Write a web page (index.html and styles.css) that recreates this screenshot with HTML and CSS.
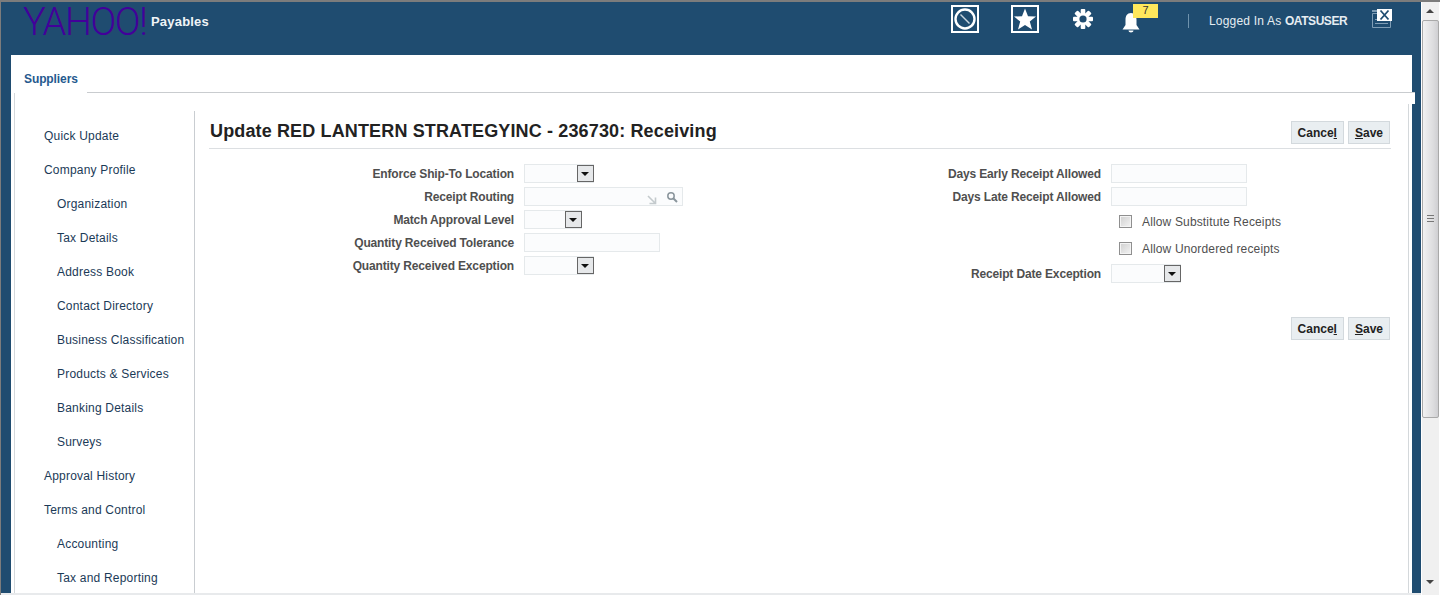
FILE: index.html
```html
<!DOCTYPE html>
<html lang="en">
<head>
  <meta charset="UTF-8">
  <title>Payables - Suppliers</title>
  <link rel="stylesheet" href="styles.css">
</head>
<body>
  <div class="frame">
    <div class="app">
      <header class="topbar">
        <div class="logo">YAHOO!</div>
        <div class="app-name">Payables</div>
        <div class="top-icons">
          <span class="box-icon">
            <svg width="24" height="24" viewBox="0 0 24 24"><circle cx="12" cy="12" r="9.5" fill="none" stroke="#fff" stroke-width="2.4"/><path d="M7.5 7.5 L16.5 16.5" stroke="#c9d6df" stroke-width="1.4"/></svg>
          </span>
          <span class="box-icon box-icon-star">
            <svg width="24" height="24" viewBox="0 0 24 24"><polygon points="12,1.5 15,9.2 23,9.5 16.8,14.6 19,22.6 12,18 5,22.6 7.2,14.6 1,9.5 9,9.2" fill="#fff"/></svg>
          </span>
          <span class="gear">
            <svg width="22" height="22" viewBox="0 0 22 22">
              <g fill="#fff">
                <rect x="8.7" y="1" width="4.6" height="20" rx="1"/>
                <rect x="8.7" y="1" width="4.6" height="20" rx="1" transform="rotate(45 11 11)"/>
                <rect x="8.7" y="1" width="4.6" height="20" rx="1" transform="rotate(90 11 11)"/>
                <rect x="8.7" y="1" width="4.6" height="20" rx="1" transform="rotate(135 11 11)"/>
              </g>
              <circle cx="11" cy="11" r="6" fill="#fff"/>
              <circle cx="11" cy="11" r="3.6" fill="#1f4c70"/>
            </svg>
          </span>
          <span class="bell">
            <svg width="20" height="24" viewBox="0 0 20 24"><path d="M10 3 C14 3 15.5 6 15.5 10 L15.5 15 L18.5 19.5 L1.5 19.5 L4.5 15 L4.5 10 C4.5 6 6 3 10 3 Z M7.5 20.5 L12.5 20.5 C12.5 23 7.5 23 7.5 20.5 Z" fill="#fff"/></svg>
            <span class="badge">7</span>
          </span>
          <span class="divider"></span>
          <span class="user">Logged In As <b>OATSUSER</b></span>
          <span class="close-icon">
            <svg width="20" height="22" viewBox="0 0 20 22">
              <path d="M0.5 6.5 H18.5 V20.5 H0.5 Z M3 12.5 H16 M3 16.5 H16" fill="none" stroke="#7f9db5"/>
              <rect x="0" y="3" width="6" height="2" fill="#7f9db5"/>
              <rect x="5" y="2" width="15" height="12" fill="#fff"/>
              <path d="M8.5 3.5 L16.5 12.5 M16.5 3.5 L8.5 12.5" stroke="#1f4c70" stroke-width="1.8"/>
            </svg>
          </span>
        </div>
      </header>

      <div class="panel">
        <div class="tabs">
          <a class="tab">Suppliers</a>
          <div class="tab-rule"><span class="tab-notch"></span></div>
        </div>
        <div class="content">
          <nav class="sidenav">
            <a class="nav-item">Quick Update</a>
            <a class="nav-item">Company Profile</a>
            <a class="nav-item sub">Organization</a>
            <a class="nav-item sub">Tax Details</a>
            <a class="nav-item sub">Address Book</a>
            <a class="nav-item sub">Contact Directory</a>
            <a class="nav-item sub">Business Classification</a>
            <a class="nav-item sub">Products &amp; Services</a>
            <a class="nav-item sub">Banking Details</a>
            <a class="nav-item sub">Surveys</a>
            <a class="nav-item">Approval History</a>
            <a class="nav-item">Terms and Control</a>
            <a class="nav-item sub">Accounting</a>
            <a class="nav-item sub">Tax and Reporting</a>
          </nav>
          <main class="main">
            <div class="page-head">
              <h1>Update RED LANTERN STRATEGYINC - 236730: Receiving</h1>
              <div class="actions">
                <button class="btn">Cance<u>l</u></button>
                <button class="btn"><u>S</u>ave</button>
              </div>
            </div>
            <div class="form">
              <div class="form-col form-col-left">
                <div class="row"><label>Enforce Ship-To Location</label><span class="select w53"><i class="arrow"></i></span></div>
                <div class="row">
                  <label>Receipt Routing</label>
                  <span class="input w159 lov">
                    <svg class="lov-arrow" width="10" height="10" viewBox="0 0 10 10"><path d="M1 1 L8 8 M8.5 2.5 V8.5 H2.5" fill="none" stroke="#c4cacd" stroke-width="1.6"/></svg>
                    <svg class="lov-search" width="12" height="12" viewBox="0 0 12 12"><circle cx="5" cy="5" r="3.2" fill="none" stroke="#8a959c" stroke-width="1.5"/><path d="M7.5 7.5 L11 11" stroke="#8a959c" stroke-width="2"/></svg>
                  </span>
                </div>
                <div class="row"><label>Match Approval Level</label><span class="select w41"><i class="arrow"></i></span></div>
                <div class="row"><label>Quantity Received Tolerance</label><span class="input w136"></span></div>
                <div class="row"><label>Quantity Received Exception</label><span class="select w53"><i class="arrow"></i></span></div>
              </div>
              <div class="form-col">
                <div class="row"><label>Days Early Receipt Allowed</label><span class="input w136"></span></div>
                <div class="row"><label>Days Late Receipt Allowed</label><span class="input w136"></span></div>
                <div class="row check-row"><span></span><span class="check"><i class="box"></i>Allow Substitute Receipts</span></div>
                <div class="row check-row"><span></span><span class="check"><i class="box"></i>Allow Unordered receipts</span></div>
                <div class="row"><label>Receipt Date Exception</label><span class="select w53"><i class="arrow"></i></span></div>
              </div>
            </div>
            <div class="actions actions-bottom">
              <button class="btn">Cance<u>l</u></button>
              <button class="btn"><u>S</u>ave</button>
            </div>
          </main>
        </div>
      </div>
      <div class="app-foot"></div>
    </div>
    <div class="scrollbar">
      <div class="sb-btn"><i class="sb-up"></i></div>
      <div class="sb-thumb"><i class="grip"></i></div>
      <div class="sb-track"></div>
      <div class="sb-btn sb-btn-down"><i class="sb-down"></i></div>
    </div>
  </div>
</body>
</html>
```
FILE: styles.css
```css
* {
  box-sizing: border-box;
}
html, body {
  margin: 0;
  height: 595px;
  overflow: hidden;
  background: #fff;
}
body {
  font-family: "Liberation Sans", Arial, sans-serif;
  font-size: 12px;
}
.frame {
  display: flex;
  height: 595px;
  border-top: 2px solid #7c7c7c;
  border-left: 1px solid #7c7c7c;
}
.app {
  width: 1420px;
  display: flex;
  flex-direction: column;
  background: #1f4c70;
}

/* top bar */
.topbar {
  height: 53px;
  display: flex;
  align-items: flex-start;
  padding-left: 22px;
  flex: none;
}
.logo {
  width: 128px;
  margin-top: 3px;
  font-family: Roboto, sans-serif;
  font-weight: 300;
  font-size: 38px;
  line-height: 34px;
  letter-spacing: -1.4px;
  color: #42009a;
  white-space: nowrap;
}
.app-name {
  margin-top: 12px;
  color: #f0f4f7;
  font-weight: bold;
  font-size: 13px;
  line-height: 15px;
  letter-spacing: 0.2px;
}
.top-icons {
  display: flex;
  align-items: flex-start;
  margin-left: 742px;
}
.box-icon {
  width: 28px;
  height: 28px;
  margin-top: 3px;
  margin-right: 32px;
  border: 2px solid #fff;
  display: flex;
  align-items: center;
  justify-content: center;
}
.box-icon svg {
  display: block;
}
.box-icon-star {
  margin-right: 33px;
}
.gear {
  width: 22px;
  height: 22px;
  margin-top: 6px;
  margin-right: 27px;
}
.bell {
  position: relative;
  width: 20px;
  height: 24px;
  margin-top: 8px;
}
.badge {
  position: absolute;
  left: 12px;
  top: -6px;
  width: 25px;
  height: 14px;
  background: #ffe85c;
  color: #333;
  font-size: 11px;
  line-height: 13px;
  text-align: center;
}
.divider {
  width: 1px;
  height: 14px;
  margin: 12px 20px 0 47px;
  background: #6f93ad;
}
.user {
  margin-top: 12px;
  color: #e6edf2;
  line-height: 14px;
  letter-spacing: 0.2px;
  white-space: nowrap;
  width: 163px;
}
.user b {
  letter-spacing: -0.45px;
}
.close-icon {
  margin-top: 5px;
  width: 20px;
}

/* panel */
.panel {
  margin: 0 9px 0 10px;
  flex: 1;
  min-height: 0;
  background: #fff;
  display: flex;
  flex-direction: column;
}
.app-foot {
  height: 2px;
  flex: none;
  background: #e8eaec;
}
.tabs {
  height: 38px;
  flex: none;
  display: flex;
  margin-right: -3px;
}
.tab {
  width: 76px;
  padding: 17px 0 0 13px;
  color: #25598e;
  font-weight: bold;
  line-height: 14px;
  letter-spacing: -0.1px;
}
.tab-rule {
  flex: 1;
  border-bottom: 1px solid #c9cccf;
  position: relative;
}
.tab-notch {
  position: absolute;
  right: 0;
  top: 100%;
  margin-top: 1px;
  width: 7px;
  height: 11px;
  background: #fff;
}
.content {
  flex: 1;
  min-height: 0;
  display: flex;
  margin: 0 3px 0 3px;
  padding-top: 18px;
  border-left: 1px solid #d4d8db;
  border-right: 1px solid #d4d8db;
}
.sidenav {
  width: 180px;
  flex: none;
  padding-top: 8px;
  border-right: 1px solid #c9cdd1;
}
.nav-item {
  display: block;
  height: 34px;
  line-height: 34px;
  padding-left: 29px;
  color: #1b3a57;
  letter-spacing: 0.2px;
  white-space: nowrap;
}
.nav-item.sub {
  padding-left: 42px;
}
.main {
  flex: 1;
  padding: 0 17px 0 14px;
}
.page-head {
  height: 38px;
  display: flex;
  justify-content: space-between;
  padding: 10px 1px 0 1px;
  border-bottom: 1px solid #dcdfe2;
}
h1 {
  margin: 0;
  font-size: 18px;
  line-height: 20px;
  font-weight: bold;
  letter-spacing: 0.14px;
  color: #222;
}
.actions {
  display: flex;
  gap: 4px;
}
.actions-bottom {
  justify-content: flex-end;
  margin: 0 1px 0 0;
  padding-top: 32px;
}
.btn {
  height: 23px;
  padding: 0 6px;
  border: 1px solid #d3d9dd;
  background: #e9eef1;
  color: #222;
  font-family: inherit;
  font-size: 12px;
  font-weight: bold;
}

/* form */
.form {
  display: flex;
  padding-top: 13px;
}
.form-col {
  flex: none;
}
.form-col-left {
  width: 587px;
}
.row {
  display: grid;
  grid-template-columns: 305px auto;
  justify-content: start;
  column-gap: 10px;
  align-items: center;
  height: 23px;
}
.row label {
  text-align: right;
  font-weight: bold;
  letter-spacing: -0.15px;
  color: #4f4f4f;
  white-space: nowrap;
}
.input, .select {
  display: flex;
  height: 19px;
  border: 1px solid #e5e9eb;
  background: #fbfcfd;
  position: relative;
}
.w159 { width: 159px; }
.w136 { width: 136px; }
.select {
  border-right: none;
}
.w53 { width: 70px; }
.w41 { width: 58px; }
.arrow {
  position: absolute;
  right: 0;
  top: 0;
  width: 17px;
  height: 17px;
  border: 1px solid #666;
  background: #e6e8ea;
}
.arrow::after {
  content: "";
  position: absolute;
  left: 3px;
  top: 6px;
  border: 4px solid transparent;
  border-top: 4px solid #111;
  border-bottom: none;
}
.lov-arrow {
  position: absolute;
  left: 122px;
  top: 7px;
}
.lov-search {
  position: absolute;
  left: 141px;
  top: 3px;
}
.check-row {
  height: 27px;
}
.check {
  display: flex;
  align-items: center;
  padding-left: 8px;
  color: #4f4f4f;
  letter-spacing: 0.15px;
}
.box {
  width: 13px;
  height: 13px;
  margin-right: 10px;
  border: 1px solid #8f8f8f;
  box-shadow: inset 0 0 0 1px #f4f4f4;
  background: linear-gradient(135deg, #cfcfcf, #f4f4f4);
}

/* browser scrollbar */
.scrollbar {
  width: 18px;
  margin-right: 1px;
  display: flex;
  flex-direction: column;
  background: #f0f0f0;
  border-left: 1px solid #fff;
}
.sb-btn {
  height: 18px;
  flex: none;
  position: relative;
}
.sb-up, .sb-down {
  position: absolute;
  left: 4px;
  top: 7px;
  border: 4px solid transparent;
  border-top: none;
  border-bottom: 4px solid #444;
}
.sb-down {
  border-bottom: none;
  border-top: 4px solid #444;
}
.sb-btn-down {
  height: 22px;
}
.sb-thumb {
  height: 398px;
  flex: none;
  border: 1px solid #a9a9a9;
  border-radius: 2px;
  background: linear-gradient(90deg, #f2f2f2, #dcdcde 70%, #cfcfd2);
  position: relative;
}
.grip {
  position: absolute;
  left: 4px;
  top: 194px;
  width: 7px;
  height: 7px;
  background: repeating-linear-gradient(180deg, #777 0 1px, transparent 1px 3px);
}
.sb-track {
  flex: 1;
}
```
